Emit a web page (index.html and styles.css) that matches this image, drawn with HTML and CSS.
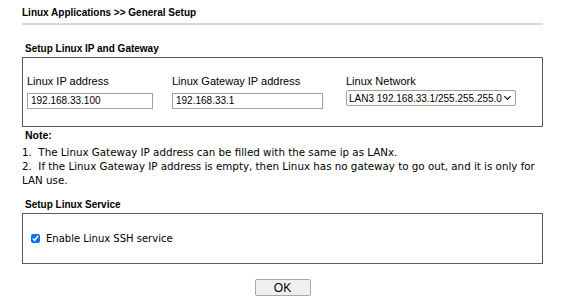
FILE: index.html
```html
<!DOCTYPE html>
<html lang="en">
<head>
    <meta charset="UTF-8">
    <title>Linux Applications - General Setup</title>
    <link rel="stylesheet" href="styles.css">
</head>
<body>

    <div class="page">
        <div class="page-title">Linux Applications &gt;&gt; General Setup</div>

        <!-- IP / gateway -->
        <div class="section-title first">Setup Linux IP and Gateway</div>
        <div class="box box-ip">
            <div class="field">
                <label for="ip">Linux IP address</label>
                <input type="text" id="ip" class="ip-input" value="192.168.33.100">
            </div>
            <div class="field">
                <label for="gw">Linux Gateway IP address</label>
                <input type="text" id="gw" class="gw-input" value="192.168.33.1">
            </div>
            <div class="field">
                <label for="net">Linux Network</label>
                <div class="select-wrap">
                    <select id="net">
                        <option>LAN3 192.168.33.1/255.255.255.0</option>
                    </select>
                </div>
            </div>
        </div>

        <div class="note">
            <div class="note-title">Note:</div>
            <div>1.&nbsp; The Linux Gateway IP address can be filled with the same ip as LANx.</div>
            <div>2.&nbsp; If the Linux Gateway IP address is empty, then Linux has no gateway to go out, and it is only for LAN use.</div>
        </div>

        <!-- service -->
        <div class="section-title">Setup Linux Service</div>
        <div class="box box-service">
            <label class="check"><input type="checkbox" checked> Enable Linux SSH service</label>
        </div>

        <div class="actions">
            <button type="button">OK</button>
        </div>
    </div>

</body>
</html>
```
FILE: styles.css
```css
body {
    margin: 0;
    background: #fff;
    color: #000;
    font-family: 'Liberation Sans', Arial, sans-serif;
}

.page {
    width: 521px;
    padding-left: 22px;
}

.page-title {
    font-size: 10px;
    font-weight: bold;
    padding-top: 7px;
    height: 16px;
    border-bottom: 2px solid #d8d8d8;
}

.section-title {
    font-size: 10px;
    font-weight: bold;
    padding-left: 3px;
    margin-top: 11px;
    height: 15px;
    line-height: 14px;
}

.section-title.first {
    margin-top: 17px;
}

.box {
    border: 1px solid #5a5a5a;
}

.box-ip {
    display: grid;
    grid-template-columns: 145px 174px auto;
    padding: 17px 4px 17px;
}

.field label {
    display: block;
    font-size: 11px;
    height: 13px;
    margin-bottom: 2px;
}

input[type="text"],
select {
    font-family: 'Liberation Sans', Arial, sans-serif;
    font-size: 10px;
    height: 16px;
    border: 1px solid #a0a0a0;
    padding: 0 3px;
    margin: 0;
    box-sizing: border-box;
    background: #fff;
}

.ip-input { width: 126px; }
.gw-input { width: 151px; }

.select-wrap {
    position: relative;
    width: 170px;
}

select {
    appearance: none;
    -webkit-appearance: none;
    width: 170px;
    padding: 0 0 0 2px;
    border-radius: 2px;
    color: #000;
    display: block;
}

/* chevron du select */
.select-wrap::after {
    content: "";
    position: absolute;
    right: 6px;
    top: 4px;
    width: 4px;
    height: 4px;
    border-right: 1.5px solid #000;
    border-bottom: 1.5px solid #000;
    transform: rotate(45deg);
    pointer-events: none;
}

.note {
    font-family: Verdana, 'DejaVu Sans', sans-serif;
    font-size: 10.3px;
    line-height: 14px;
    margin-top: 1px;
}

.note-title {
    font-family: 'Liberation Sans', Arial, sans-serif;
    font-size: 10.5px;
    font-weight: bold;
    padding-left: 3px;
    margin-bottom: 3px;
}

.box-service {
    height: 49px;
    display: flex;
    align-items: center;
    padding-left: 8px;
}

.check {
    font-family: Verdana, 'DejaVu Sans', sans-serif;
    font-size: 10px;
    display: flex;
    align-items: center;
    gap: 6px;
}

.check input {
    margin: 0;
    width: 9px;
    height: 9px;
}

.actions {
    text-align: center;
    padding-top: 14px;
}

button {
    font-family: 'Liberation Sans', Arial, sans-serif;
    font-size: 12px;
    width: 56px;
    height: 17px;
    padding: 0;
    background: #efefef;
    border: 1px solid #a8a8a8;
    border-radius: 2px;
}
```
